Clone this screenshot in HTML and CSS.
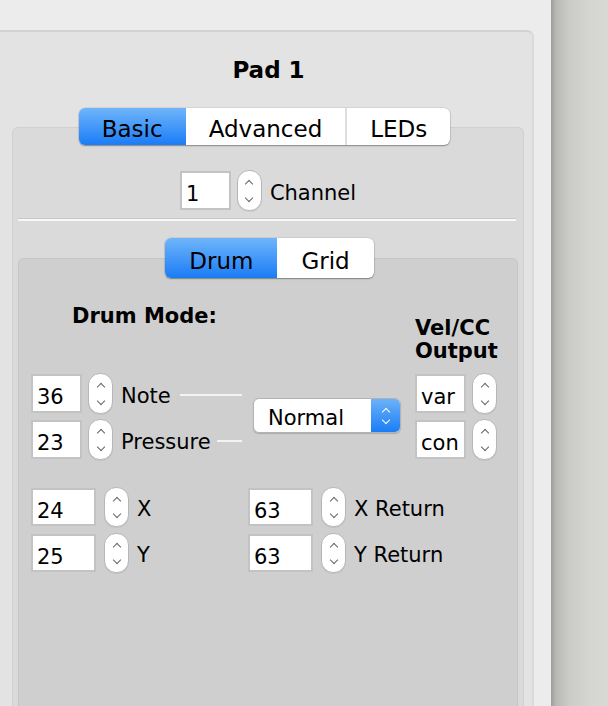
FILE: index.html
```html
<!DOCTYPE html>
<html>
<head>
<meta charset="utf-8">
<link rel="stylesheet" href="styles.css">
</head>
<body>
<div class="screen">
  <div class="window">
    <div class="panel">
      <div class="title">Pad 1</div>
      <div class="group group-outer">
        <div class="seg seg-main">
          <div class="seg-item active">Basic</div>
          <div class="seg-item">Advanced</div>
          <div class="seg-item sep">LEDs</div>
        </div>
        <div class="channel-row">
          <div class="field">1</div>
          <div class="stepper"></div>
          <span class="label">Channel</span>
        </div>
        <div class="divider"></div>
        <div class="group group-inner">
          <div class="seg seg-sub">
            <div class="seg-item active">Drum</div>
            <div class="seg-item">Grid</div>
          </div>
          <div class="drum-body">
            <div class="col-left">
              <div class="heading heading-drum">Drum Mode:</div>
              <div class="rows">
                <div class="row">
                  <div class="field">36</div>
                  <div class="stepper"></div>
                  <span class="label">Note</span>
                  <span class="line"></span>
                </div>
                <div class="row">
                  <div class="field">23</div>
                  <div class="stepper"></div>
                  <span class="label">Pressure</span>
                  <span class="line line-short"></span>
                </div>
              </div>
            </div>
            <div class="select">
              <span class="select-text">Normal</span>
              <span class="select-arrow"></span>
            </div>
            <div class="col-right">
              <div class="heading heading-vel">Vel/CC<br>Output</div>
              <div class="rows">
                <div class="row">
                  <div class="field">var</div>
                  <div class="stepper"></div>
                </div>
                <div class="row">
                  <div class="field">con</div>
                  <div class="stepper"></div>
                </div>
              </div>
            </div>
          </div>
          <div class="xy-grid">
            <div class="row row-xy">
              <div class="field field-wide">24</div>
              <div class="stepper stepper-xy"></div>
              <span class="label">X</span>
            </div>
            <div class="row row-xy">
              <div class="field field-wide">63</div>
              <div class="stepper stepper-xy"></div>
              <span class="label">X Return</span>
            </div>
            <div class="row row-xy">
              <div class="field field-wide">25</div>
              <div class="stepper stepper-xy"></div>
              <span class="label">Y</span>
            </div>
            <div class="row row-xy">
              <div class="field field-wide">63</div>
              <div class="stepper stepper-xy"></div>
              <span class="label">Y Return</span>
            </div>
          </div>
        </div>
      </div>
    </div>
  </div>
  <div class="desk"></div>
</div>
</body>
</html>
```

FILE: styles.css
```css
body {
  margin: 0;
  font-family: "DejaVu Sans", Verdana, sans-serif;
  color: #000;
}

.screen {
  display: flex;
  width: 608px;
  height: 706px;
  overflow: hidden;
}

.window {
  width: 551px;
  box-sizing: border-box;
  padding: 30px 17px 0 0;
  background: #ececec;
  display: flex;
  flex-direction: column;
}

.desk {
  flex: 1;
  background: linear-gradient(to right, #9d9e9a 0, #b8b9b5 5px, #cbccc8 18px, #d5d6d2 40px, #d8d8d4 100%);
}

.panel {
  flex: 1;
  display: flex;
  flex-direction: column;
  background: #e3e3e3;
  border-top: 2px solid #d3d3d3;
  border-right: 2px solid #d9d9d9;
  border-top-right-radius: 7px;
}

.title {
  font-weight: bold;
  font-size: 23px;
  line-height: 25px;
  text-align: center;
  margin: 26px 0 0 5px;
}

.group {
  display: flex;
  flex-direction: column;
  flex: 1;
  border-radius: 6px 6px 0 0;
}

.group-outer {
  margin: 44px 8px 0 12px;
  background: #dadada;
  border: 1px solid #d0d0d0;
  border-bottom: none;
}

.group-inner {
  margin: 37px 5px 0 5px;
  background: #cfcfcf;
  border: 1px solid #c5c5c5;
  border-bottom: none;
}

/* segmented tabs */
.seg {
  display: flex;
  align-self: center;
  border-radius: 6px;
  background: #fff;
  box-shadow: 0 1px 1.5px rgba(0, 0, 0, 0.35), 0 0 0 0.5px rgba(0, 0, 0, 0.12);
  overflow: hidden;
}

.seg-main {
  margin: -20px 7px 0 0;
  height: 37px;
}

.seg-sub {
  margin: -21px 0 0 3px;
  height: 40px;
}

.seg-item {
  font-size: 23px;
  padding: 6px 23px 0;
  line-height: 31px;
}

.seg-sub .seg-item {
  padding: 7px 24px 0;
  line-height: 33px;
}

.seg-item.active {
  background: linear-gradient(#6fb5fa, #1a7cf6);
}

.seg-item.sep {
  border-left: 2px solid #dedede;
}

/* controls */
.channel-row {
  display: flex;
  align-items: center;
  align-self: center;
  margin-top: 25px;
  height: 41px;
}

.field {
  box-sizing: border-box;
  width: 51px;
  height: 39px;
  background: #fff;
  border: 2px solid #c3c3c3;
  font-size: 21px;
  line-height: 25px;
  padding: 9px 0 0 4px;
  flex: none;
}

.field-wide {
  width: 65px;
  height: 38px;
  padding-top: 9px;
}

.stepper {
  box-sizing: border-box;
  flex: none;
  width: 25px;
  height: 41px;
  margin-left: 6px;
  border: 1px solid #b6b6b6;
  border-radius: 12px;
  background: #fff;
  box-shadow: 0 1px 0 rgba(0, 0, 0, 0.06);
  display: flex;
  flex-direction: column;
  align-items: center;
  justify-content: space-between;
  padding: 10px 0 9px;
}

.stepper-xy {
  height: 40px;
  margin-left: 8px;
}

.stepper::before,
.stepper::after,
.select-arrow::before,
.select-arrow::after {
  content: "";
  width: 5px;
  height: 5px;
  border: solid #666;
  transform: rotate(45deg);
}

.stepper::before,
.select-arrow::before {
  border-width: 1.7px 0 0 1.7px;
}

.stepper::after,
.select-arrow::after {
  border-width: 0 1.7px 1.7px 0;
}

.label {
  font-size: 21px;
  line-height: 25px;
  padding-top: 5px;
  margin-left: 8px;
  white-space: nowrap;
}

.divider {
  margin: 7px 7px 0 5px;
  border-top: 1px solid #c8c8c8;
  height: 2px;
  background: #f7f7f7;
}

/* drum section */
.drum-body {
  display: flex;
  align-items: flex-end;
  margin-top: 26px;
  padding-left: 12px;
}

.col-left {
  width: 211px;
  flex: none;
}

.heading {
  font-weight: bold;
  font-size: 21px;
  line-height: 25px;
}

.heading-drum {
  padding-left: 41px;
  margin-bottom: 44px;
}

.heading-vel {
  line-height: 23px;
  margin-bottom: 10px;
}

.rows {
  display: flex;
  flex-direction: column;
  gap: 5px;
}

.row {
  display: flex;
  align-items: center;
  height: 41px;
}

.line {
  flex: 1;
  height: 2px;
  background: #f3f3f3;
  margin: 3px 0 0 9px;
}

.line-short {
  margin-left: 6px;
}

.select {
  box-sizing: border-box;
  display: flex;
  width: 148px;
  height: 35px;
  margin: 0 0 27px 11px;
  background: #fff;
  border: 1px solid #b3b3b3;
  border-radius: 6px;
  box-shadow: 0 1px 1px rgba(0, 0, 0, 0.18);
  overflow: hidden;
}

.select-text {
  flex: 1;
  font-size: 21px;
  line-height: 25px;
  padding: 7px 0 0 14px;
}

.select-arrow {
  width: 29px;
  background: linear-gradient(#6cb2f9, #1b7df5);
  display: flex;
  flex-direction: column;
  align-items: center;
  justify-content: center;
  gap: 2px;
}

.select-arrow::before,
.select-arrow::after {
  border-color: #fff;
}

.col-right {
  margin-left: 14px;
}

/* x / y */
.xy-grid {
  display: grid;
  grid-template-columns: 217px auto;
  row-gap: 6px;
  margin-top: 27px;
  padding-left: 12px;
}

.row-xy {
  height: 40px;
}
```
